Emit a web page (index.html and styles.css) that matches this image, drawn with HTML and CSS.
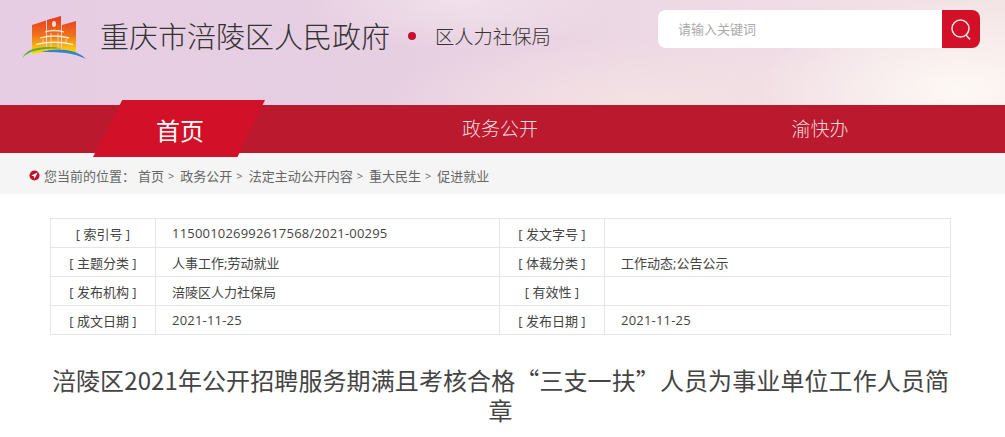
FILE: index.html
```html
<!DOCTYPE html>
<html lang="zh-CN">

<head>
    <meta charset="UTF-8">
    <meta name="viewport" content="width=device-width, initial-scale=1.0">
    <title>重庆市涪陵区人民政府</title>
    <link rel="stylesheet" href="styles.css">
</head>

<body>
    <header class="top">
        <div class="brand">
            <svg class="logo" viewBox="0 0 66 50" aria-hidden="true">
                <defs>
                    <linearGradient id="flag" x1="0" y1="0" x2="0" y2="1">
                        <stop offset="0" stop-color="#e8381f" />
                        <stop offset="0.5" stop-color="#f0701c" />
                        <stop offset="0.85" stop-color="#fbc30d" />
                        <stop offset="1" stop-color="#ffdc06" />
                    </linearGradient>
                </defs>
                <path fill="url(#flag)"
                    d="M11 14 L25 9.500 V41 Q17 41.500 11 43 Z M26 9 L40 5 V40.500 L26 40.500 Z M41 14 L55 10 V43 Q48 41.500 41 41 Z" />
                <ellipse cx="33" cy="13" rx="2" ry="3" fill="#f6e0d0" />
                <path fill="none" stroke="#fbe9d2" stroke-width="1.300"
                    d="M24 21 Q33 18 43 21 M19 27 Q33 23 48 27 M15 33.500 Q33 29 52 33.500" />
                <path fill="none" stroke="#fbe9d2" stroke-width="0.700"
                    d="M22 28 V33 M30 22 V40 M37 22 V40 M45 28 V33" />
                <path fill="#5cb02f" d="M1 47 Q6 38 17 37 Q30 35 41 37.500 Q20 37 10 41 Q5 43 1 47 Z" />
                <path fill="#2f86c6" d="M20 41 Q34 37 48 39.500 Q59 41.500 65 48 Q56 43.500 45 42 Q32 40.500 20 41 Z" />
            </svg>
            <h1 class="site-name">重庆市涪陵区人民政府</h1>
            <span class="dot"></span>
            <span class="dept">区人力社保局</span>
        </div>
        <form class="search" action="#">
            <input class="search-input" type="text" placeholder="请输入关键词">
            <button class="search-btn" type="button" aria-label="搜索">
                <svg viewBox="0 0 24 24" width="24" height="24" fill="none" stroke="#fbe4e6" stroke-width="1.500">
                    <circle cx="11.500" cy="11.500" r="8.500" />
                    <path d="M17 18 L21 22.500" />
                </svg>
            </button>
        </form>
    </header>

    <nav class="nav">
        <a class="nav-item active" href="#">首页</a>
        <a class="nav-item" href="#">政务公开</a>
        <a class="nav-item" href="#">渝快办</a>
    </nav>

    <div class="crumbs">
        <svg class="pin" viewBox="0 0 12 12" aria-hidden="true">
            <circle cx="6" cy="6" r="5.500" fill="#c0142a" />
            <path d="M9.500 2.700 L2.500 6 L5.300 6.800 L6 9.500 Z" fill="#fff" />
        </svg>
        <span class="crumb-label">您当前的位置：</span>
        <a href="#">首页</a><i>&gt;</i>
        <a href="#">政务公开</a><i>&gt;</i>
        <a href="#">法定主动公开内容</a><i>&gt;</i>
        <a href="#">重大民生</a><i>&gt;</i>
        <a href="#">促进就业</a>
    </div>

    <main class="content">
        <table class="info">
            <colgroup>
                <col class="col-label">
                <col class="col-value">
                <col class="col-label">
                <col>
            </colgroup>
            <tr>
                <th>[ 索引号 ]</th>
                <td class="num">115001026992617568/2021-00295</td>
                <th>[ 发文字号 ]</th>
                <td></td>
            </tr>
            <tr>
                <th>[ 主题分类 ]</th>
                <td>人事工作;劳动就业</td>
                <th>[ 体裁分类 ]</th>
                <td>工作动态;公告公示</td>
            </tr>
            <tr>
                <th>[ 发布机构 ]</th>
                <td>涪陵区人力社保局</td>
                <th>[ 有效性 ]</th>
                <td></td>
            </tr>
            <tr>
                <th>[ 成文日期 ]</th>
                <td class="num">2021-11-25</td>
                <th>[ 发布日期 ]</th>
                <td class="num">2021-11-25</td>
            </tr>
        </table>
        <h2 class="headline">涪陵区2021年公开招聘服务期满且考核合格“三支一扶”人员为事业单位工作人员简章</h2>
    </main>
</body>

</html>
```

FILE: styles.css
```css
body {
    margin: 0;
    font-family: "Open Sans", "Noto Sans CJK SC", sans-serif;
    color: #333;
    background-color: #fff;
}

a {
    color: inherit;
    text-decoration: none;
}

.top {
    display: flex;
    justify-content: space-between;
    height: 105px;
    padding: 10px 25px 0 21px;
    box-sizing: border-box;
    background-color: #e9d3e2;
    background-image:
        radial-gradient(ellipse 200px 90px at 960px 90px, rgba(255, 250, 245, 0.95), rgba(255, 245, 240, 0) 100%),
        radial-gradient(ellipse 260px 60px at 640px 100px, rgba(246, 228, 226, 0.8), rgba(246, 228, 226, 0) 100%),
        radial-gradient(ellipse 160px 50px at 460px 0, rgba(244, 232, 238, 0.7), rgba(244, 232, 238, 0) 100%),
        linear-gradient(90deg, #e6cde3 0%, #e7cfe2 40%, #eedae5 70%, #f3e4e6 100%);
}

.brand {
    display: flex;
    align-items: center;
    height: 52px;
}

.logo {
    width: 66px;
    height: 50px;
    margin-right: 13px;
}

.site-name {
    margin: 0 0 3px;
    font-size: 29px;
    font-weight: 300;
    color: #333;
}

.dot {
    width: 8px;
    height: 8px;
    margin: 0 19px 0 18px;
    border-radius: 50%;
    background-color: #c8102e;
}

.dept {
    font-size: 19.300px;
    font-weight: 300;
    color: #333;
}

.search {
    display: flex;
    width: 322px;
    height: 38px;
}

.search-input {
    flex: 1;
    min-width: 0;
    padding: 0 20px;
    border: none;
    border-radius: 8px 0 0 8px;
    background-color: #fff;
    font-family: inherit;
    font-size: 13px;
    outline: none;
}

.search-input::placeholder {
    color: #aaa;
}

.search-btn {
    display: flex;
    justify-content: center;
    align-items: center;
    width: 38px;
    padding: 0;
    border: none;
    border-radius: 0 8px 8px 0;
    background-color: #d21128;
    cursor: pointer;
}

.nav {
    position: relative;
    display: flex;
    height: 48px;
    padding-left: 20px;
    background-color: #bb1a2e;
}

.nav-item {
    position: relative;
    width: 320px;
    font-size: 19px;
    font-weight: 300;
    line-height: 48px;
    text-align: center;
    color: #f5dbdf;
}

.nav-item.active {
    z-index: 1;
    font-size: 24px;
    font-weight: 400;
    line-height: 52px;
    color: #fff;
}

.nav-item.active:before {
    content: "";
    position: absolute;
    top: -5px;
    left: 73px;
    width: 172px;
    height: 57px;
    background-color: #d21128;
    clip-path: polygon(17% 0, 100% 0, 84% 100%, 0 100%);
    z-index: -1;
}

.crumbs {
    display: flex;
    align-items: center;
    height: 41px;
    padding: 3px 0 0 29px;
    box-sizing: border-box;
    font-size: 13px;
    color: #666;
    background-color: #f5f5f5;
}

.crumbs i {
    margin: 0 6px 0 4px;
    font-style: normal;
    font-size: 11px;
}

.pin {
    width: 11px;
    height: 11px;
    margin-right: 4px;
}

.crumb-label {
    margin-right: 3px;
}

.content {
    padding: 24px 54px 0 50px;
}

.info {
    width: 901px;
    border-collapse: collapse;
    table-layout: fixed;
    font-size: 13px;
}

.col-label {
    width: 105px;
}

.col-value {
    width: 344px;
}

.info th,
.info td {
    height: 28px;
    padding: 0;
    border: 1px solid #e6e6e6;
    font-weight: 400;
    color: #444;
}

.info td {
    padding-left: 16px;
}

.info .num {
    letter-spacing: 0.2px;
}

.headline {
    margin: 30px 0 0;
    font-family: "Noto Sans CJK SC", sans-serif;
    font-size: 24px;
    font-weight: 400;
    letter-spacing: 0.1px;
    line-height: 30px;
    text-align: center;
    color: #444;
}
```
